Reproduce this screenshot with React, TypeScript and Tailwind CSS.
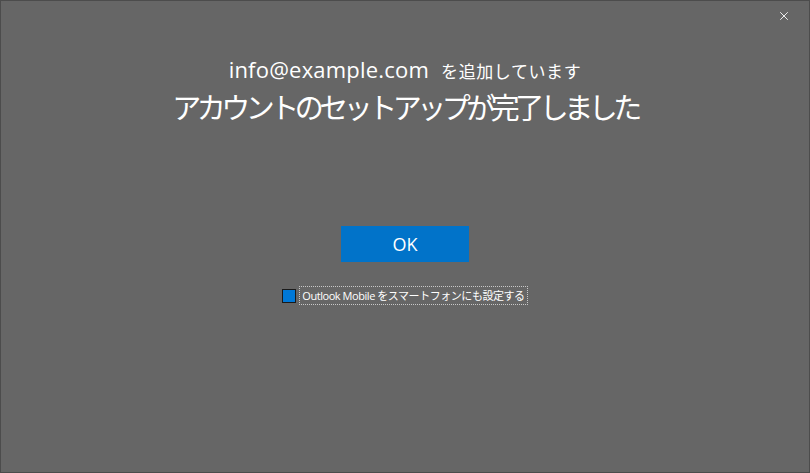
import { X } from 'lucide-react'

const font = { fontFamily: '"Segoe UI", "Open Sans", "Noto Sans CJK JP", sans-serif' }

export default function App() {
  return (
    <div
      className="relative w-[810px] h-[473px] bg-[#666666] border border-[#4c4c4c] text-white flex flex-col items-center"
      style={font}
    >
      <button className="absolute right-[18px] top-[8px] text-white">
        <X size={14} strokeWidth={1.5} />
      </button>

      <div className="mt-[54px] flex items-baseline gap-[12px]">
        <span className="text-[22px] leading-[28px] tracking-[0.2px]">info@example.com</span>
        <span className="text-[17px] leading-[28px] tracking-[0.6px]">を追加しています</span>
      </div>
      <h1 className="mt-[2px] text-[29px] leading-[40px] tracking-[-4.5px]">
        アカウントのセットアップが完了しました
      </h1>

      <button className="mt-[98px] w-[128px] h-[36px] bg-[#0173c9] text-[18px] text-white">
        OK
      </button>

      <label className="mt-[24px] flex items-center gap-[3px] text-[11px]">
        <span className="w-[14px] h-[14px] bg-[#0078d7] border border-[#1a1a1a]" />
        <span className="px-[2px] py-[1px] border border-dotted border-[#c8c8c8] leading-[15px] tracking-[-0.45px]">
          Outlook Mobile をスマートフォンにも設定する
        </span>
      </label>
    </div>
  )
}
